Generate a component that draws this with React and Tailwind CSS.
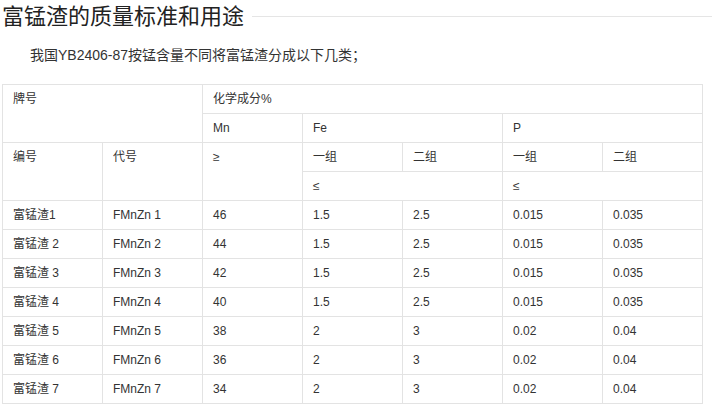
import React from "react";

const font = { fontFamily: '"Liberation Sans", Arial, "Noto Sans CJK SC", sans-serif' };

const rows = [
  ["富锰渣1", "FMnZn 1", "46", "1.5", "2.5", "0.015", "0.035"],
  ["富锰渣 2", "FMnZn 2", "44", "1.5", "2.5", "0.015", "0.035"],
  ["富锰渣 3", "FMnZn 3", "42", "1.5", "2.5", "0.015", "0.035"],
  ["富锰渣 4", "FMnZn 4", "40", "1.5", "2.5", "0.015", "0.035"],
  ["富锰渣 5", "FMnZn 5", "38", "2", "3", "0.02", "0.04"],
  ["富锰渣 6", "FMnZn 6", "36", "2", "3", "0.02", "0.04"],
  ["富锰渣 7", "FMnZn 7", "34", "2", "3", "0.02", "0.04"],
];

const td = "border border-[#e3e3e3] px-[10px] py-[5px] leading-[18px] align-top text-left font-normal h-[29px]";

export default function App() {
  return (
    <div className="w-[712px] h-[405px] bg-white overflow-hidden pl-[2px] pt-[2px] text-[#333]" style={font}>
      <div className="flex items-center h-[30px]">
        <h1 className="text-[22px] leading-[30px] text-[#222] font-normal">富锰渣的质量标准和用途</h1>
        <div className="flex-1 h-px bg-[#e5e5e5] ml-[8px] mt-[-2px]" />
      </div>
      <p className="mt-[11px] pl-[28px] text-[14px] leading-[24px]">我国YB2406-87按锰含量不同将富锰渣分成以下几类；</p>
      <table className="mt-[17px] border-collapse w-[701px] table-fixed text-[12px]">
        <colgroup>
          <col className="w-[100px]" />
          <col className="w-[100px]" />
          <col className="w-[100px]" />
          <col className="w-[100px]" />
          <col className="w-[100px]" />
          <col className="w-[100px]" />
          <col className="w-[100px]" />
        </colgroup>
        <tbody>
          <tr>
            <td className={td} colSpan={2} rowSpan={2}>牌号</td>
            <td className={td} colSpan={5}>化学成分%</td>
          </tr>
          <tr>
            <td className={td}>Mn</td>
            <td className={td} colSpan={2}>Fe</td>
            <td className={td} colSpan={2}>P</td>
          </tr>
          <tr>
            <td className={td} rowSpan={2}>编号</td>
            <td className={td} rowSpan={2}>代号</td>
            <td className={td} rowSpan={2}>≥</td>
            <td className={td}>一组</td>
            <td className={td}>二组</td>
            <td className={td}>一组</td>
            <td className={td}>二组</td>
          </tr>
          <tr>
            <td className={td} colSpan={2}>≤</td>
            <td className={td} colSpan={2}>≤</td>
          </tr>
          {rows.map((r, i) => (
            <tr key={i}>
              {r.map((c, j) => (
                <td key={j} className={td}>{c}</td>
              ))}
            </tr>
          ))}
        </tbody>
      </table>
    </div>
  );
}
